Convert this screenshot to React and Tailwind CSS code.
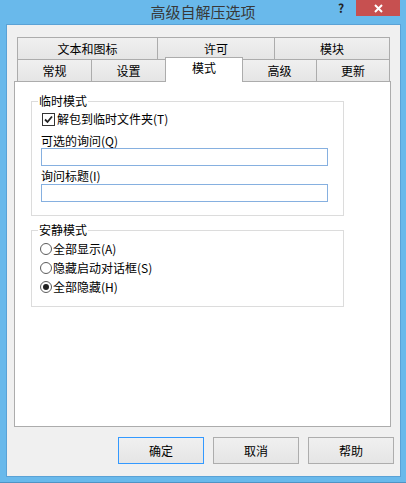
import React from "react";

function Tab({ label, className = "" }) {
  return (
    <div
      className={`h-[22px] flex items-center justify-center border-t border-[#acacac] bg-gradient-to-b from-[#f0f0f0] to-[#e5e5e5] text-[12px] leading-[14px] ${className}`}
    >
      {label}
    </div>
  );
}

function Radio({ label, checked }) {
  return (
    <div className="h-[19px] flex items-center">
      <div className="ml-[8px] w-[12px] h-[12px] rounded-full border border-[#5c5c5c] bg-white flex items-center justify-center">
        {checked && <div className="w-[6px] h-[6px] rounded-full bg-[#222]" />}
      </div>
      <span className="ml-[1px] text-[12px] leading-[14px]">{label}</span>
    </div>
  );
}

function Button({ label, primary }) {
  return (
    <button
      className={`w-[86px] h-[27px] border ${
        primary ? "border-[#3399ff]" : "border-[#adadad]"
      } bg-gradient-to-b from-[#f0f0f0] to-[#e5e5e5] text-[12px] leading-[14px]`}
    >
      {label}
    </button>
  );
}

export default function App() {
  return (
    <div className="w-[406px] h-[483px] bg-[#69b9eb] flex flex-col font-['Noto_Sans_CJK_SC',sans-serif] text-black border-b border-[#4f93c4]">
      {/* title bar */}
      <div className="h-[24px] relative flex items-center justify-center">
        <span className="text-[15px] leading-[18px] text-[#383838] -mt-[1px]">高级自解压选项</span>
        <span className="absolute left-[338px] top-[1px] text-[12px] font-bold leading-[14px] text-[#222]">?</span>
        <div className="absolute right-[6px] top-0 w-[44px] h-[16px] bg-[#c75050] flex items-center justify-center">
          <svg width="9" height="9" viewBox="0 0 9 9">
            <path d="M1 1 L8 8 M8 1 L1 8" stroke="#fff" strokeWidth="2" />
          </svg>
        </div>
      </div>

      {/* client area */}
      <div className="ml-[6px] mr-[5px] h-[453px] border border-[#5aa2d6] bg-[#f0f0f0] flex flex-col">
        <div className="pt-[12px] pl-[7px] pr-[9px]">
          {/* tabs */}
          <div className="ml-[3px] w-[373px]">
            <div className="flex">
              <Tab label="文本和图标" className="w-[140px] border-l" />
              <Tab label="许可" className="w-[117px] border-l" />
              <Tab label="模块" className="w-[116px] border-l border-r" />
            </div>
            <div className="flex h-[22px] items-start">
              <Tab label="常规" className="w-[74px] border-l" />
              <Tab label="设置" className="w-[74px] border-l" />
              <div className="relative z-10 -mt-[2px] w-[78px] h-[25px] bg-white border-t border-l border-r border-[#acacac] flex justify-center pt-[3px] text-[12px] leading-[14px]">
                模式
              </div>
              <Tab label="高级" className="w-[73px]" />
              <Tab label="更新" className="w-[74px] border-l border-r" />
            </div>
          </div>

          {/* panel */}
          <div className="h-[346px] w-[377px] bg-white border border-[#acacac] pt-[12px] pl-[16px]">
            <fieldset className="w-[313px] h-[122px] border border-[#dcdcdc]">
              <legend className="ml-[6px] px-[1px] text-[12px] leading-[14px]">临时模式</legend>
              <div className="pl-[9px] flex flex-col">
                <div className="mt-[4px] h-[14px] flex items-center">
                  <div className="ml-[1px] w-[13px] h-[13px] border border-[#333] bg-white flex items-center justify-center">
                    <svg width="9" height="9" viewBox="0 0 9 9">
                      <path d="M1 4.5 L3.5 7 L8 1.5" stroke="#222" strokeWidth="1.8" fill="none" />
                    </svg>
                  </div>
                  <span className="ml-[2px] text-[12px] leading-[14px]">解包到临时文件夹(T)</span>
                </div>
                <div className="mt-[8px] text-[12px] leading-[14px]">可选的询问(Q)</div>
                <div className="w-[287px] h-[18px] border border-[#86b0e0] bg-white" />
                <div className="mt-[3px] text-[12px] leading-[14px]">询问标题(I)</div>
                <div className="mt-[1px] w-[287px] h-[18px] border border-[#86b0e0] bg-white" />
              </div>
            </fieldset>

            <fieldset className="mt-[7px] w-[313px] h-[84px] border border-[#dcdcdc]">
              <legend className="ml-[6px] px-[1px] text-[12px] leading-[14px]">安静模式</legend>
              <div className="mt-[2px] flex flex-col">
                <Radio label="全部显示(A)" />
                <Radio label="隐藏启动对话框(S)" />
                <Radio label="全部隐藏(H)" checked />
              </div>
            </fieldset>
          </div>
        </div>

        {/* buttons */}
        <div className="mt-[10px] pr-[6px] flex justify-end gap-[9px]">
          <Button label="确定" primary />
          <Button label="取消" />
          <Button label="帮助" />
        </div>
      </div>
    </div>
  );
}
